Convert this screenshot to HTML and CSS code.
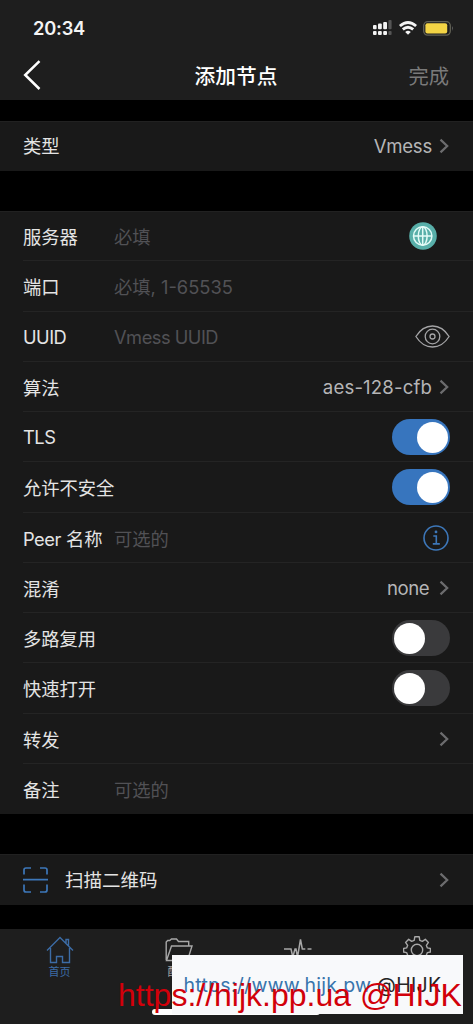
FILE: index.html
```html
<!DOCTYPE html>
<html lang="zh-CN">
<head>
<meta charset="utf-8">
<meta name="viewport" content="width=device-width, initial-scale=1">
<title>添加节点</title>
<link rel="stylesheet" href="styles.css">
</head>
<body>
<svg width="0" height="0" class="defs">
  <symbol id="chevron" viewBox="0 0 10 16"><path d="M1.5 1.6 8.2 8l-6.700 6.400" fill="none" stroke="#6c6c6e" stroke-width="2.200"/></symbol>
</svg>
<div class="screen">
  <header class="header">
    <div class="status">
      <span class="clock">20:34</span>
      <div class="status-icons">
        <svg width="20" height="16" viewBox="0 0 20 16">
          <g fill="#f4f4f4"><rect x="0" y="5" width="3.6" height="4.2" rx="1"/><rect x="5" y="3.6" width="3.8" height="5.6" rx="1"/><rect x="10.2" y="2" width="3.8" height="7.2" rx="1"/><rect x="0" y="11" width="3.6" height="3.9" rx="1"/><rect x="5" y="11" width="3.8" height="3.9" rx="1"/><rect x="10.2" y="11" width="3.8" height="3.9" rx="1"/></g>
          <g fill="#555"><rect x="15.4" y="0" width="3.2" height="9.2" rx="1"/><rect x="15.4" y="11" width="3.2" height="3.9" rx="1"/></g>
        </svg>
        <svg class="wifi" width="18" height="14" viewBox="0 0 18 14"><g fill="none" stroke="#f4f4f4" stroke-width="2.8"><path d="M.9 5Q9-2 17.100 5"/><path d="M3.800 8.400Q9 4 14.200 8.400"/></g><path d="M6.200 10.900Q9 8.600 11.800 10.900L9 13.800Z" fill="#f4f4f4"/></svg>
        <svg class="battery" width="31" height="15" viewBox="0 0 31 15"><rect x=".7" y=".7" width="26.6" height="13.4" rx="4" fill="none" stroke="#626256" stroke-width="1.3"/><rect x="2.4" y="2.2" width="21.8" height="10.400" rx="2" fill="#f3d445"/><path d="M29 5q1.8 2.4 0 5z" fill="#777"/></svg>
      </div>
    </div>
    <nav class="navbar">
      <svg class="back" width="18" height="30" viewBox="0 0 18 30"><path d="M16.500 1.200 2.200 15l14.300 14" fill="none" stroke="#fff" stroke-width="2.5"/></svg>
      <h1 class="title">添加节点</h1>
      <span class="done">完成</span>
    </nav>
  </header>

  <section class="group group-type">
    <div class="row"><span class="label">类型</span><span class="value">Vmess</span><svg class="chevron"><use href="#chevron"/></svg></div>
  </section>

  <section class="group group-form">
    <div class="row"><span class="label">服务器</span><span class="hint">必填</span>
      <svg class="globe" width="28" height="28" viewBox="0 0 28 28"><circle cx="14" cy="14" r="13.8" fill="#58afa9"/><g fill="none" stroke="#e3fbf7" stroke-width="1.5"><circle cx="13.7" cy="14" r="9.2"/><ellipse cx="13.7" cy="14" rx="4.4" ry="9.2"/><path d="M13.7 4.800v18.400M4.500 14h18.400"/></g></svg></div>
    <div class="row"><span class="label">端口</span><span class="hint">必填, 1-65535</span></div>
    <div class="row"><span class="label latin">UUID</span><span class="hint latin">Vmess UUID</span>
      <svg class="eye" width="35" height="23" viewBox="0 0 35 23"><g fill="none" stroke="#a4a4a6" stroke-width="1.3"><path d="M.9 11.500C5 5 11 1 17.500 1S30 5 34.100 11.500C30 18 24 22 17.500 22S5 18 .9 11.500Z"/><circle cx="17.500" cy="11.500" r="7.300"/><circle cx="17.500" cy="11.500" r="2.500"/></g></svg></div>
    <div class="row"><span class="label">算法</span><span class="value value-wide">aes-128-cfb</span><svg class="chevron"><use href="#chevron"/></svg></div>
    <div class="row"><span class="label latin">TLS</span><span class="switch on"></span></div>
    <div class="row"><span class="label">允许不安全</span><span class="switch on"></span></div>
    <div class="row"><span class="label"><span class="peer">Peer</span> 名称</span><span class="hint">可选的</span>
      <svg class="info" width="26" height="26" viewBox="0 0 26 26"><g fill="none" stroke="#3d77b9" stroke-width="1.600"><circle cx="13" cy="13" r="12"/><path d="M10.300 11h3v7.500M9.800 18.900h7"/></g><circle cx="13" cy="6.900" r="1.400" fill="#3d77b9"/></svg></div>
    <div class="row"><span class="label">混淆</span><span class="value value-short">none</span><svg class="chevron"><use href="#chevron"/></svg></div>
    <div class="row"><span class="label">多路复用</span><span class="switch"></span></div>
    <div class="row"><span class="label">快速打开</span><span class="switch"></span></div>
    <div class="row"><span class="label">转发</span><svg class="chevron"><use href="#chevron"/></svg></div>
    <div class="row"><span class="label">备注</span><span class="hint">可选的</span></div>
  </section>

  <section class="group group-scan">
    <div class="row">
      <svg class="scan" width="25" height="26" viewBox="0 0 25 26"><path d="M1 7.500V3q0-2 2-2h5M17 1h5q2 0 2 2v4.500M1 17.500V23q0 2 2 2h5M17 25h5q2 0 2-2v-5.500M0 12.700h25" fill="none" stroke="#3d77b9" stroke-width="1.700"/></svg>
      <span class="scan-label">扫描二维码</span><svg class="chevron"><use href="#chevron"/></svg>
    </div>
  </section>

  <footer class="tabbar">
    <div class="tab active"><svg width="28" height="28" viewBox="0 0 28 28"><path d="M1 14.500 14 1.500l13 13M4.500 12v14.500h6V20.500h6v6h7V12M20 7V3.500h2.500v6" fill="none" stroke="currentColor" stroke-width="1.400"/></svg><span>首页</span></div>
    <div class="tab"><svg width="28" height="28" viewBox="0 0 28 28"><path d="M1.200 24V6l1.500-1.500h2L6.500 3h5l2 2.500h10.200V10M1.500 24.500 6.500 10H27l-4.500 14.500Z" fill="none" stroke="currentColor" stroke-width="1.400"/></svg><span>配置</span></div>
    <div class="tab"><svg width="28" height="28" viewBox="0 0 28 28"><path d="M0 13h7l1.800 8 2.200-8h1l1.500 8 3-17.500 1.800 9.500h3M23.500 13h4" fill="none" stroke="currentColor" stroke-width="1.500"/></svg><span>数据</span></div>
    <div class="tab"><svg width="28" height="28" viewBox="0 0 28 28"><g fill="none" stroke="currentColor" stroke-width="1.400" stroke-linejoin="round"><path d="M11.800.8h4.400l.6 3.500 2.500 1 3-2 3.100 3.100-2 3 1 2.500 3 .6v3.500l-3 .6-1 2.500 2 3-3.100 3.100-3-2-2.500 1-.6 3.500h-4.400l-.6-3.500-2.500-1-3 2-3.100-3.100 2-3-1-2.500-3-.6v-3.500l3-.6 1-2.500-2-3 3.100-3.100 3 2 2.500-1Z"/><circle cx="14" cy="14" r="5.700"/></g></svg><span>设置</span></div>
    <div class="home-indicator"></div>
    <div class="credit"><span class="credit-link">https://www.hijk.pw</span><span class="credit-name">@HIJK</span></div>
    <div class="watermark">https://hijk.pp.ua @HIJK</div>
  </footer>
</div>
</body>
</html>
```
FILE: styles.css
```css
* { box-sizing: border-box; }
body {
  margin: 0;
  background: #000;
  color: #e4e4e4;
  font-family: Inter, "Noto Sans CJK SC", sans-serif;
}
.defs { position: absolute; }
svg { display: block; flex: none; }
.screen {
  display: flex;
  flex-direction: column;
  width: 473px;
  height: 1024px;
  overflow: hidden;
}
.header { height: 100px; background: #1e1e1e; flex: none; }
.status {
  display: flex;
  justify-content: space-between;
  height: 50px;
  padding: 17px 19px 0 33px;
}
.clock { font-size: 18.3px; line-height: 23px; font-weight: 600; color: #f4f4f4; letter-spacing: -.2px; }
.status-icons { display: flex; align-items: flex-start; padding-top: 3px; }
.wifi { margin: 1px 0 0 6px; }
.battery { margin: 1px 0 0 6px; }
.navbar {
  display: grid;
  grid-template-columns: 1fr auto 1fr;
  align-items: center;
  height: 50px;
  padding: 0 24px 0 23px;
}
.title { margin: 0; padding-top: 3px; font-size: 20.7px; font-weight: 500; line-height: 30px; color: #fff; }
.done { justify-self: end; padding-top: 3px; font-size: 20.3px; line-height: 30px; color: #7a7a7a; }
.group { background: #191919; flex: none; box-shadow: inset 0 1px #212121; }
.group-type { margin-top: 21px; height: 50px; }
.group-form { margin-top: 40px; height: 603px; display: grid; grid-template-rows: repeat(12, 1fr); }
.group-scan { margin-top: 40px; height: 51px; }
.row {
  display: flex;
  align-items: center;
  height: 100%;
  margin-left: 23px;
  padding-right: 23px;
}
.group-form .row { padding-top: 1px; }
.group-form .row:not(:last-child) { border-bottom: 1px solid #242424; }
.label, .hint { font-size: 18.3px; line-height: 26px; white-space: nowrap; }
.label { width: 91px; flex: none; }
.hint { color: #515155; }
.group-form .label, .group-form .hint { padding-top: 2px; }
.group-form .latin { padding-top: 0; letter-spacing: -.5px; }
.peer { letter-spacing: -.5px; }
.value { margin-left: auto; font-size: 18.6px; line-height: 26px; letter-spacing: -.25px; color: #b5b5b7; }
.value-wide { letter-spacing: .15px; }
.value-short { letter-spacing: -.5px; }
.chevron { width: 10px; height: 16px; margin-left: 7px; }
.value-short + .chevron { margin-left: 10px; }
.label + .chevron, .scan-label + .chevron { margin-left: auto; }
.row > .chevron { margin-right: 1px; }
.globe { margin: 0 13.500px 0 auto; }
.eye { margin-left: auto; }
.info { margin: 0 1px 0 auto; }
.switch {
  width: 58px;
  height: 36px;
  margin-left: auto;
  padding: 2.500px 1.500px;
  border-radius: 18px;
  background: #3a3a3c;
}
.switch::before {
  content: "";
  display: block;
  width: 31px;
  height: 31px;
  border-radius: 50%;
  background: #fff;
}
.switch.on { background: #3775be; }
.switch.on::before { margin-left: auto; margin-right: .5px; }
.scan-label { margin-left: 17px; font-size: 18.5px; line-height: 26px; }
.tabbar {
  position: relative;
  display: grid;
  grid-template-columns: repeat(4, 119px);
  height: 95px;
  margin-top: 24px;
  background: #1e1e1e;
  flex: none;
}
.tab {
  display: flex;
  flex-direction: column;
  align-items: center;
  padding-top: 7px;
  color: #a8a8a8;
  font-size: 11px;
  line-height: 16px;
}
.tab.active { color: #3c6ca6; }
.home-indicator {
  position: absolute;
  left: 152px;
  top: 80px;
  width: 168px;
  height: 6px;
  border-radius: 3px;
  background: #fff;
}
.credit {
  position: absolute;
  left: 172px;
  top: 26px;
  width: 291px;
  height: 59px;
  padding: 16px 0 0 11.500px;
  background: #f8f9fb;
  font-size: 19.5px;
  line-height: 29px;
  white-space: nowrap;
}
.credit-link { letter-spacing: .27px; color: #3975ad; }
.credit-name { position: absolute; left: 205px; letter-spacing: .3px; color: #252525; }
.watermark {
  position: absolute;
  left: 118px;
  top: 48px;
  color: #d2000a;
  font-family: "Liberation Sans", sans-serif;
  font-size: 32px;
  line-height: 37px;
  white-space: nowrap;
}
```
